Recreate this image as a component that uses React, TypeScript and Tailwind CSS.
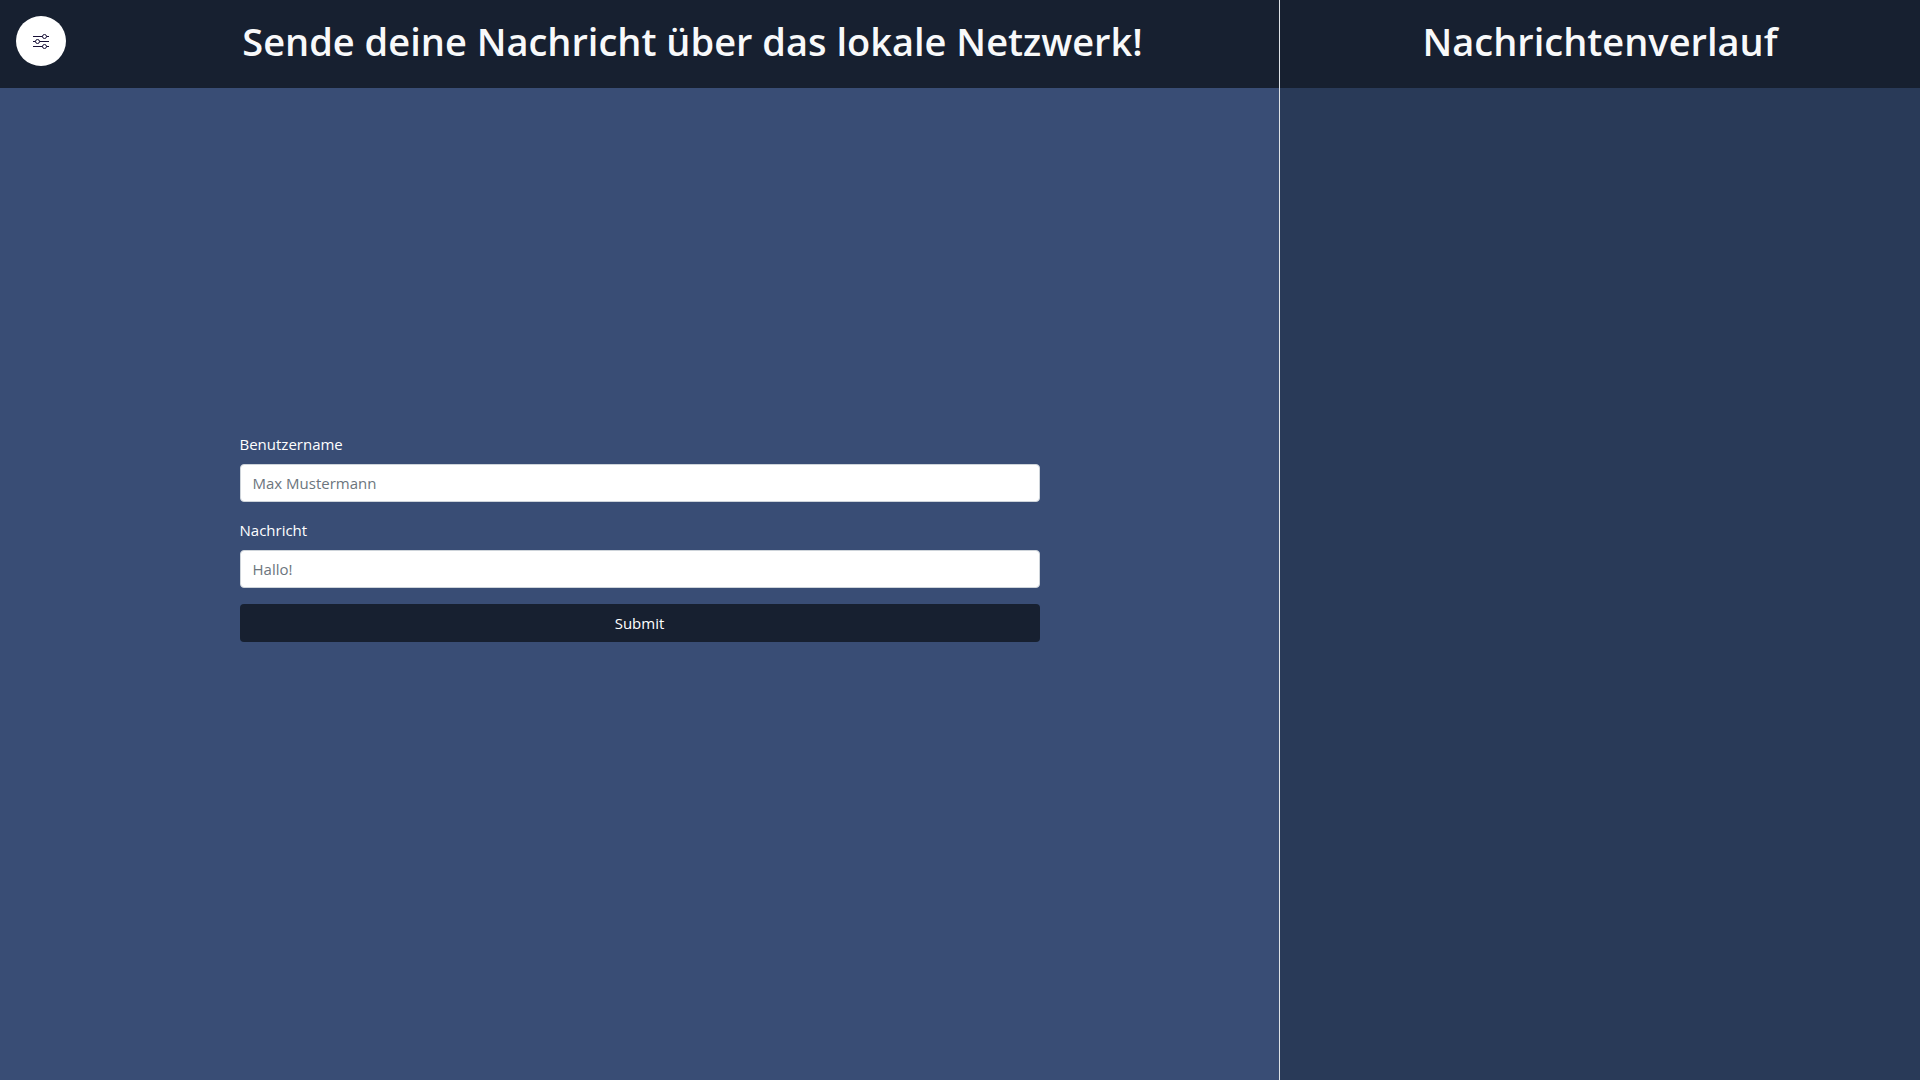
function SlidersIcon() {
  return (
    <svg className="size-4" viewBox="0 0 16 16" fill="none" stroke="#170f36" strokeWidth="1" aria-hidden="true">
      <path d="M0 3.5h9.5M13.5 3.5H16M0 8.5h2.5M6.5 8.5H16M0 13.5h9.5M13.5 13.5H16" />
      <circle cx="11.5" cy="3.5" r="2" />
      <circle cx="4.5" cy="8.5" r="2" />
      <circle cx="11.5" cy="13.5" r="2" />
    </svg>
  );
}

function Field({ id, label, placeholder }: { id: string; label: string; placeholder: string }) {
  return (
    <div className="mb-4">
      <label htmlFor={id} className="mb-2 block">
        {label}
      </label>
      <input
        id={id}
        type="text"
        placeholder={placeholder}
        className="block h-[38px] w-full rounded border border-[#ced4da] bg-white px-3 text-[#212529] placeholder:text-[#6c757d]"
      />
    </div>
  );
}

export default function App() {
  return (
    <div className="grid min-h-screen grid-cols-3 bg-[#394d75] font-['Open_Sans','Segoe_UI',sans-serif] text-[15px] leading-6 text-white">
      <main className="col-span-2 flex flex-col border-r border-[#dee2e6]">
        <header className="flex h-22 items-start bg-[#172030] pt-4 pl-4">
          <button
            type="button"
            aria-label="Einstellungen"
            className="flex size-[50px] shrink-0 items-center justify-center rounded-full bg-white"
          >
            <SlidersIcon />
          </button>
          <h1 className="grow pl-10 text-center text-[38px] leading-[50px] font-semibold text-[#f8f9fa]">
            Sende deine Nachricht über das lokale Netzwerk!
          </h1>
        </header>
        <div className="flex grow items-center justify-center pb-[94px]">
          <form className="w-full max-w-[800px]">
            <Field id="username" label="Benutzername" placeholder="Max Mustermann" />
            <Field id="message" label="Nachricht" placeholder="Hallo!" />
            <button type="submit" className="h-[38px] w-full rounded bg-[#172030]">
              Submit
            </button>
          </form>
        </div>
      </main>
      <aside className="bg-[#293a58]">
        <header className="flex h-22 items-start justify-center bg-[#172030] pt-4">
          <h2 className="text-[38px] leading-[50px] font-semibold text-[#f8f9fa]">Nachrichtenverlauf</h2>
        </header>
      </aside>
    </div>
  );
}
